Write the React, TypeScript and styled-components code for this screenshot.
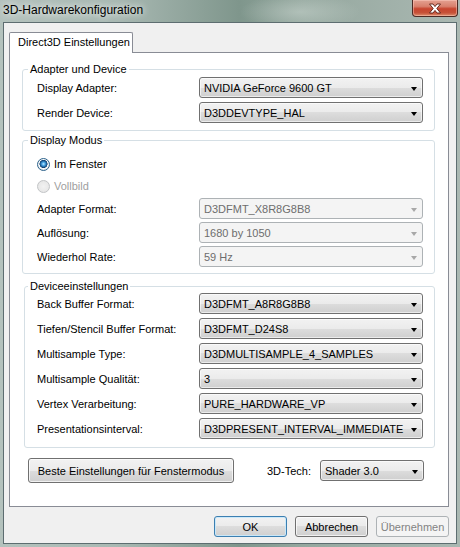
import styled, { createGlobalStyle, css } from 'styled-components'

const GlobalStyle = createGlobalStyle`
  html, body {
    margin: 0;
    padding: 0;
  }
  body {
    font-family: 'Liberation Sans', Arial, sans-serif;
    font-size: 11px;
    color: #000;
  }
  * {
    box-sizing: border-box;
  }
`

type Row = { label: string; value: string }

const adapterRows: Row[] = [
  { label: 'Display Adapter:', value: 'NVIDIA GeForce 9600 GT' },
  { label: 'Render Device:', value: 'D3DDEVTYPE_HAL' },
]

const modeRows: Row[] = [
  { label: 'Adapter Format:', value: 'D3DFMT_X8R8G8B8' },
  { label: 'Auflösung:', value: '1680 by 1050' },
  { label: 'Wiederhol Rate:', value: '59 Hz' },
]

const deviceRows: Row[] = [
  { label: 'Back Buffer Format:', value: 'D3DFMT_A8R8G8B8' },
  { label: 'Tiefen/Stencil Buffer Format:', value: 'D3DFMT_D24S8' },
  { label: 'Multisample Type:', value: 'D3DMULTISAMPLE_4_SAMPLES' },
  { label: 'Multisample Qualität:', value: '3' },
  { label: 'Vertex Verarbeitung:', value: 'PURE_HARDWARE_VP' },
  { label: 'Presentationsinterval:', value: 'D3DPRESENT_INTERVAL_IMMEDIATE' },
]

function Dropdown({ value, disabled }: { value: string; disabled?: boolean }) {
  return (
    <Combo $disabled={disabled}>
      <span>{value}</span>
      <Arrow $disabled={disabled} />
    </Combo>
  )
}

function CloseIcon() {
  return (
    <svg width="14" height="11" viewBox="0 0 14 11">
      <path
        d="M1.5 1 H5 L7 3.6 L9 1 H12.5 L8.8 5.5 L12.5 10 H9 L7 7.4 L5 10 H1.5 L5.2 5.5 Z"
        fill="#fff"
        stroke="#5a1d12"
        strokeWidth="0.9"
        strokeLinejoin="round"
      />
    </svg>
  )
}

function App() {
  return (
    <>
      <GlobalStyle />
      <Window>
        <TitleBar>
          <Title>3D-Hardwarekonfiguration</Title>
          <CloseButton>
            <CloseIcon />
          </CloseButton>
        </TitleBar>
        <Client>
          <TabStrip>
            <Tab>Direct3D Einstellungen</Tab>
          </TabStrip>
          <TabPanel>
            <Group $mt={9} $pt={1} $pb={7}>
              <Legend>Adapter und Device</Legend>
              <FormGrid $gap={4}>
                {adapterRows.map(r => (
                  <FieldRow key={r.label}>
                    <FieldLabel>{r.label}</FieldLabel>
                    <Dropdown value={r.value} />
                  </FieldRow>
                ))}
              </FormGrid>
            </Group>

            <Group $mt={2} $pt={9} $pb={6}>
              <Legend>Display Modus</Legend>
              <RadioList>
                <RadioRow>
                  <RadioMark $checked />
                  Im Fenster
                </RadioRow>
                <RadioRow $disabled>
                  <RadioMark $disabled />
                  Vollbild
                </RadioRow>
              </RadioList>
              <FormGrid $gap={3}>
                {modeRows.map(r => (
                  <FieldRow key={r.label}>
                    <FieldLabel>{r.label}</FieldLabel>
                    <Dropdown value={r.value} disabled />
                  </FieldRow>
                ))}
              </FormGrid>
            </Group>

            <Group $mt={5} $pt={0} $pb={8} $inset={2}>
              <Legend>Deviceeinstellungen</Legend>
              <FormGrid $gap={4}>
                {deviceRows.map(r => (
                  <FieldRow key={r.label}>
                    <FieldLabel>{r.label}</FieldLabel>
                    <Dropdown value={r.value} />
                  </FieldRow>
                ))}
              </FormGrid>
            </Group>

            <BottomRow>
              <Button $width={206} $height={25}>Beste Einstellungen für Fenstermodus</Button>
              <TechLabel>3D-Tech:</TechLabel>
              <TechCombo>
                <Dropdown value="Shader 3.0" />
              </TechCombo>
            </BottomRow>
          </TabPanel>

          <Footer>
            <Button $default>OK</Button>
            <Button>Abbrechen</Button>
            <Button disabled>Übernehmen</Button>
          </Footer>
        </Client>
      </Window>
    </>
  )
}

export default App

const Window = styled.div`
  width: 460px;
  height: 547px;
  display: flex;
  flex-direction: column;
  padding: 0 3px 3px 3px;
  background:
    radial-gradient(ellipse 60px 18px at 300px 12px, rgba(200, 212, 206, 0.55), transparent),
    linear-gradient(90deg, #b4c2bd 0%, #a9b9b3 25%, #7f968c 52%, #95a89f 66%, #aab8b2 100%);
`

const TitleBar = styled.div`
  height: 22px;
  display: flex;
  justify-content: space-between;
  align-items: flex-start;
  margin-right: -1px;
`

const Title = styled.span`
  font-family: 'Liberation Sans', Arial, sans-serif;
  font-size: 12px;
  line-height: 21px;
  color: #000;
  text-shadow: 0 0 6px rgba(255, 255, 255, 0.9), 0 0 10px rgba(255, 255, 255, 0.6);
`

const CloseButton = styled.div`
  width: 46px;
  height: 17px;
  display: flex;
  align-items: center;
  justify-content: center;
  border: 1px solid #4b2a24;
  border-top: none;
  border-radius: 0 0 4px 4px;
  background: linear-gradient(#e4a191 0%, #d8806d 40%, #c7452f 55%, #c65138 80%, #de8f6e 100%);
  box-shadow: inset 0 0 0 1px rgba(255, 210, 200, 0.45);
`

const Client = styled.div`
  flex: 1;
  display: flex;
  flex-direction: column;
  border: 1px solid #5d6d70;
  background: #f0f0f0;
  padding: 9px 7px 6px 5px;
`

const TabStrip = styled.div`
  display: flex;
  position: relative;
  z-index: 1;
  margin-bottom: -1px;
`

const Tab = styled.div`
  width: 124px;
  height: 21px;
  padding-left: 8px;
  line-height: 18px;
  background: #fff;
  border: 1px solid #898c95;
  border-bottom: none;
  border-radius: 2px 2px 0 0;
`

const TabPanel = styled.div`
  flex: 1;
  display: flex;
  flex-direction: column;
  background: #fff;
  border: 1px solid #898c95;
  padding: 0 13px 0 12px;
`

const Group = styled.fieldset<{ $mt: number; $pt: number; $pb: number; $inset?: number }>`
  margin: ${p => p.$mt}px 0 0 ${p => p.$inset ?? 0}px;
  padding: ${p => p.$pt}px 11px ${p => p.$pb}px ${p => 14 - (p.$inset ?? 0)}px;
  border: 1px solid #d5dfe5;
  border-radius: 3px;
  min-width: 0;
`

const Legend = styled.legend`
  height: 14px;
  line-height: 14px;
  padding: 0 2px;
  margin-left: -9px;
`

const FormGrid = styled.div<{ $gap: number }>`
  display: flex;
  flex-direction: column;
  gap: ${p => p.$gap}px;
`

const FieldRow = styled.div`
  display: grid;
  grid-template-columns: 1fr 224px;
  align-items: center;
`

const FieldLabel = styled.span`
  white-space: nowrap;
`

const Combo = styled.div<{ $disabled?: boolean }>`
  height: 21px;
  display: flex;
  align-items: center;
  justify-content: space-between;
  padding: 0 5px 0 4px;
  border-radius: 3px;
  white-space: nowrap;
  ${p =>
    p.$disabled
      ? css`
          border: 1px solid #adb2b5;
          background: #f4f4f4;
          color: #6d6d6d;
        `
      : css`
          border: 1px solid #707070;
          background: linear-gradient(#f2f2f2 0%, #ebebeb 50%, #dddddd 50%, #cfcfcf 100%);
          box-shadow: inset 0 0 0 1px rgba(255, 255, 255, 0.6);
          color: #000;
        `}
`

const Arrow = styled.span<{ $disabled?: boolean }>`
  width: 0;
  height: 0;
  margin-top: 2px;
  border-left: 3.5px solid transparent;
  border-right: 3.5px solid transparent;
  border-top: 4px solid ${p => (p.$disabled ? '#a8a8a8' : '#000')};
`

const RadioList = styled.div`
  display: flex;
  flex-direction: column;
  gap: 6px;
  margin-bottom: 4px;
`

const RadioRow = styled.label<{ $disabled?: boolean }>`
  display: flex;
  align-items: center;
  gap: 4px;
  height: 16px;
  color: ${p => (p.$disabled ? '#a0a0a0' : '#000')};
`

const RadioMark = styled.span<{ $checked?: boolean; $disabled?: boolean }>`
  width: 13px;
  height: 13px;
  border-radius: 50%;
  flex: none;
  ${p =>
    p.$disabled
      ? css`
          border: 1px solid #c2c4c6;
          background: radial-gradient(circle, #f2f2f2 0, #e6e6e6 6px);
        `
      : p.$checked
        ? css`
            border: 1px solid #2c628b;
            background: radial-gradient(
              circle at 50% 45%,
              #c6ecff 0,
              #4aa8e8 1.6px,
              #1c5a92 3.2px,
              #103f6e 3.8px,
              #ffffff 4.3px,
              #dfe3e6 6px
            );
          `
        : css`
            border: 1px solid #8e8f8f;
            background: radial-gradient(circle, #fff 0, #e3e3e3 6px);
          `}
`

const BottomRow = styled.div`
  display: flex;
  align-items: center;
  margin: 10px 11px 0 6px;
`

const TechLabel = styled.span`
  margin-left: auto;
  margin-right: 9px;
`

const TechCombo = styled.div`
  width: 104px;
`

const Footer = styled.div`
  display: flex;
  justify-content: flex-end;
  gap: 8px;
  margin-top: 9px;
`

const Button = styled.button<{ $default?: boolean; $width?: number; $height?: number }>`
  width: ${p => p.$width ?? 73}px;
  height: ${p => p.$height ?? 21}px;
  padding: 0;
  font-family: 'Liberation Sans', Arial, sans-serif;
  font-size: 11px;
  color: #000;
  border: 1px solid ${p => (p.$default ? '#3c7fb1' : '#707070')};
  border-radius: 3px;
  background: linear-gradient(#f2f2f2 0%, #ebebeb 50%, #dddddd 50%, #cfcfcf 100%);
  box-shadow: inset 0 0 0 1px ${p => (p.$default ? 'rgba(200, 232, 250, 0.95)' : 'rgba(255, 255, 255, 0.7)')};

  &:disabled {
    border-color: #adb2b5;
    background: #f4f4f4;
    box-shadow: none;
    color: #838383;
  }
`
